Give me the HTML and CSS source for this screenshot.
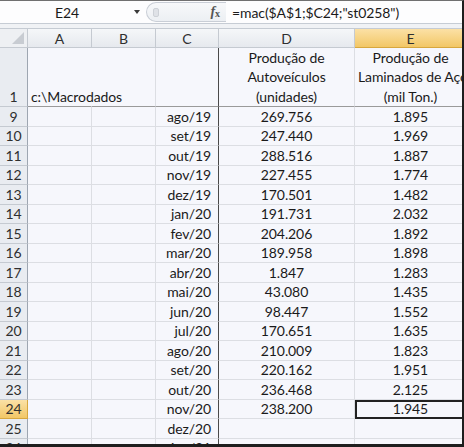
FILE: index.html
```html
<!DOCTYPE html>
<html lang="pt">
<head>
  <meta charset="UTF-8">
  <title>Macrodados - planilha</title>
  <link rel="stylesheet" href="styles.css">
</head>
<body>

  <div class="window">

    <!-- Formula bar -->
    <div class="formula-bar">
      <div class="name-box">
        <span class="name">E24</span>
        <span class="arrow"></span>
      </div>
      <div class="fx-box">
        <span class="grip"></span>
        <span class="fx"><i>f</i><sub>x</sub></span>
      </div>
      <div class="formula">=mac($A$1;$C24;"st0258")</div>
    </div>
    <div class="bar-gap"></div>

    <!-- Sheet -->
    <div class="sheet">
      <div class="hd corner"><span class="tri"></span></div>
      <div class="hd col">A</div>
      <div class="hd col">B</div>
      <div class="hd col">C</div>
      <div class="hd col">D</div>
      <div class="hd col sel">E</div>

      <div class="hd row tall">1</div>
      <div class="cell tall path">c:\Macrodados</div>
      <div class="cell tall"></div>
      <div class="cell tall"></div>
      <div class="cell tall title">Produção de<br>Autoveículos<br>(unidades)</div>
      <div class="cell tall title e"><span>Produção de</span><span>Laminados de Aço</span><span>(mil Ton.)</span></div>

      <div class="hd row">9</div><div class="cell"></div><div class="cell"></div><div class="cell date">ago/19</div><div class="cell num">269.756</div><div class="cell num">1.895</div>
      <div class="hd row">10</div><div class="cell"></div><div class="cell"></div><div class="cell date">set/19</div><div class="cell num">247.440</div><div class="cell num">1.969</div>
      <div class="hd row">11</div><div class="cell"></div><div class="cell"></div><div class="cell date">out/19</div><div class="cell num">288.516</div><div class="cell num">1.887</div>
      <div class="hd row">12</div><div class="cell"></div><div class="cell"></div><div class="cell date">nov/19</div><div class="cell num">227.455</div><div class="cell num">1.774</div>
      <div class="hd row">13</div><div class="cell"></div><div class="cell"></div><div class="cell date">dez/19</div><div class="cell num">170.501</div><div class="cell num">1.482</div>
      <div class="hd row">14</div><div class="cell"></div><div class="cell"></div><div class="cell date">jan/20</div><div class="cell num">191.731</div><div class="cell num">2.032</div>
      <div class="hd row">15</div><div class="cell"></div><div class="cell"></div><div class="cell date">fev/20</div><div class="cell num">204.206</div><div class="cell num">1.892</div>
      <div class="hd row">16</div><div class="cell"></div><div class="cell"></div><div class="cell date">mar/20</div><div class="cell num">189.958</div><div class="cell num">1.898</div>
      <div class="hd row">17</div><div class="cell"></div><div class="cell"></div><div class="cell date">abr/20</div><div class="cell num">1.847</div><div class="cell num">1.283</div>
      <div class="hd row">18</div><div class="cell"></div><div class="cell"></div><div class="cell date">mai/20</div><div class="cell num">43.080</div><div class="cell num">1.435</div>
      <div class="hd row">19</div><div class="cell"></div><div class="cell"></div><div class="cell date">jun/20</div><div class="cell num">98.447</div><div class="cell num">1.552</div>
      <div class="hd row">20</div><div class="cell"></div><div class="cell"></div><div class="cell date">jul/20</div><div class="cell num">170.651</div><div class="cell num">1.635</div>
      <div class="hd row">21</div><div class="cell"></div><div class="cell"></div><div class="cell date">ago/20</div><div class="cell num">210.009</div><div class="cell num">1.823</div>
      <div class="hd row">22</div><div class="cell"></div><div class="cell"></div><div class="cell date">set/20</div><div class="cell num">220.162</div><div class="cell num">1.951</div>
      <div class="hd row">23</div><div class="cell"></div><div class="cell"></div><div class="cell date">out/20</div><div class="cell num">236.468</div><div class="cell num">2.125</div>
      <div class="hd row sel">24</div><div class="cell"></div><div class="cell"></div><div class="cell date">nov/20</div><div class="cell num">238.200</div><div class="cell num active">1.945</div>
      <div class="hd row">25</div><div class="cell"></div><div class="cell"></div><div class="cell date">dez/20</div><div class="cell num"></div><div class="cell num"></div>
      <div class="hd row">26</div><div class="cell"></div><div class="cell"></div><div class="cell date">jan/21</div><div class="cell num"></div><div class="cell num"></div>
    </div>

  </div>

</body>
</html>
```

FILE: styles.css
```css
/* General */
body {
  margin: 0;
  padding: 0;
  background: #fff;
}

.window {
  width: 464px;
  height: 447px;
  box-sizing: border-box;
  border-top: 1px solid #707070;
  border-right: 2px solid #1e1e1e;
  border-bottom: 3px solid #1e1e1e;
  overflow: hidden;
  font-family: Lato, "Liberation Sans", sans-serif;
  font-size: 14px;
  letter-spacing: -0.1px;
  color: #1a1a1a;
  background: #f6f7fc;
}

/* Formula bar */
.formula-bar {
  display: flex;
  align-items: center;
  height: 22px;
  background: #fdfdfe;
  border-bottom: 1px solid #c6ccd4;
}

.name-box {
  width: 146px;
  height: 100%;
  display: flex;
  align-items: center;
  box-sizing: border-box;
}

.name-box .name {
  flex: 1;
  text-align: center;
}

.name-box .arrow {
  width: 0;
  height: 0;
  margin-right: 6px;
  border-left: 3px solid transparent;
  border-right: 3px solid transparent;
  border-top: 4px solid #3a3a3a;
}

.fx-box {
  width: 80px;
  height: 20px;
  display: flex;
  align-items: center;
  justify-content: space-between;
  box-sizing: border-box;
  padding: 0 6px 0 6px;
  border: 1px solid #c9ced6;
  border-right: none;
  border-radius: 11px 0 0 11px;
  background: linear-gradient(#f7f8fa, #eceff3);
}

.grip {
  width: 4px;
  height: 7px;
  border-radius: 2px;
  background: #dfe2e7;
  border: 1px solid #cdd1d7;
}

.fx {
  font-family: "Liberation Serif", serif;
  font-size: 14px;
  font-weight: bold;
  color: #555;
}

.fx sub {
  font-size: 10px;
  vertical-align: -1px;
}

.formula {
  padding-left: 6px;
  white-space: nowrap;
}

.bar-gap {
  height: 4px;
  background: #f0f2f5;
  border-bottom: 1px solid #c5cbd3;
}

/* Sheet grid */
.sheet {
  display: grid;
  grid-template-columns: 28px 64px 64px 63px 136px 112px;
  grid-template-rows: 19px 59px;
  grid-auto-rows: 19.5px;
}

.hd {
  display: flex;
  align-items: center;
  justify-content: center;
  box-sizing: border-box;
  color: #2f2f2f;
  background: linear-gradient(#f5f7f9, #e6e9ee);
  border-right: 1px solid #c5cad1;
  border-bottom: 1px solid #c5cad1;
}

.hd.row {
  background: #e9ecf1;
  border-right: 1px solid #9ea6b1;
}

.hd.tall {
  align-items: flex-end;
  padding-bottom: 1px;
}

.hd.sel {
  background: linear-gradient(#fbe1a6, #f2c766);
  border-right-color: #d7a73e;
  border-bottom-color: #d7a73e;
}

.corner {
  justify-content: flex-end;
  align-items: flex-end;
  background: #eef0f3;
}

.tri {
  width: 0;
  height: 0;
  margin: 0 3px 3px 0;
  border-left: 12px solid transparent;
  border-bottom: 12px solid #c8ccd2;
}

.cell {
  box-sizing: border-box;
  display: flex;
  align-items: center;
  padding: 0 3px;
  white-space: nowrap;
  overflow: hidden;
  border-right: 1px solid #dcdee3;
  border-bottom: 1px solid #dcdee3;
}

.cell:nth-child(6n+4) {
  border-right-color: #4a4a4a;
}

.cell.tall {
  align-items: flex-end;
  border-bottom-color: #9a9a9a;
}

/* text spills into the empty B1 */
.cell.path {
  overflow: visible;
  padding-bottom: 1px;
  border-right-color: transparent;
}

.cell.title {
  flex-direction: column;
  justify-content: flex-end;
  align-items: stretch;
  text-align: center;
  line-height: 19.5px;
}

.cell.title span {
  display: block;
}

.cell.date {
  justify-content: flex-end;
  padding-right: 7px;
}

.cell.num {
  justify-content: center;
}

.cell.active {
  outline: 2px solid #222;
  outline-offset: -2px;
}
```
